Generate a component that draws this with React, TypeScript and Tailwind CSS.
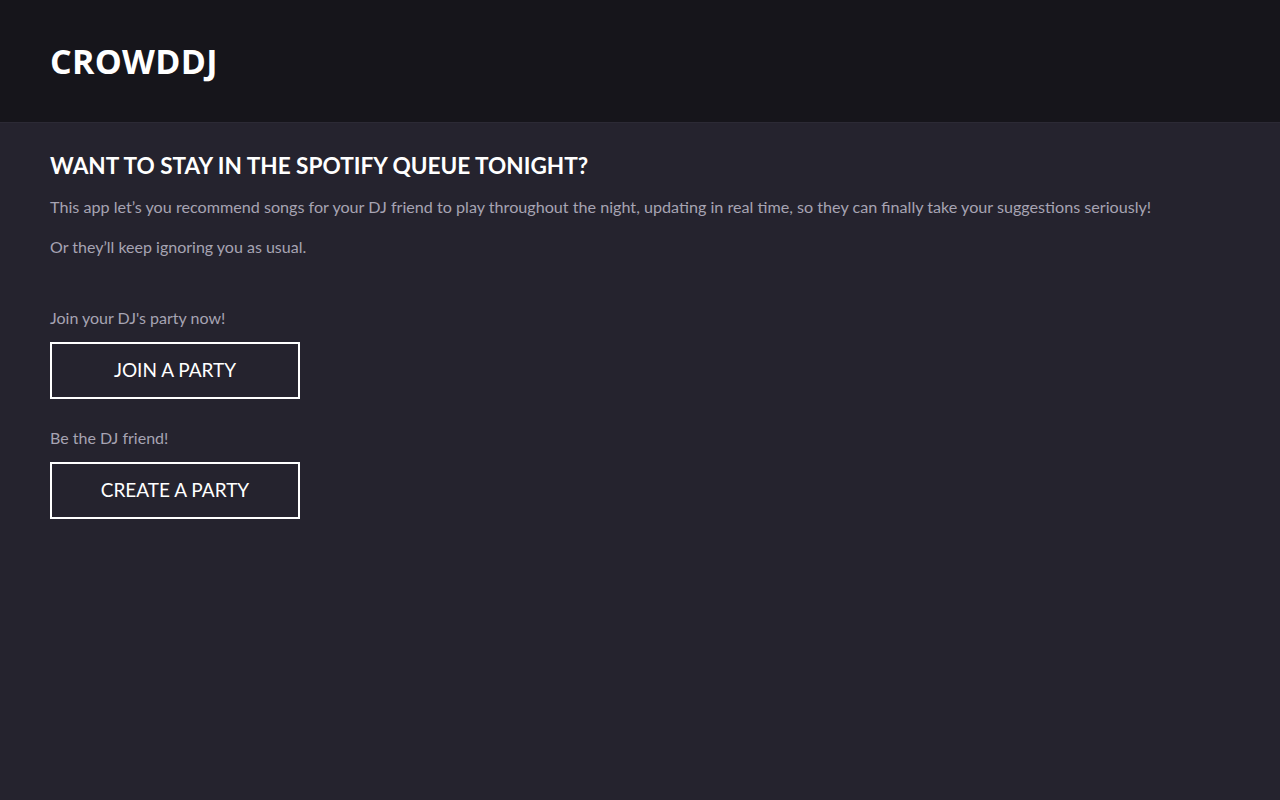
export default function App() {
  return (
    <div className="min-h-screen bg-[#25232e] font-['Lato',sans-serif]">
      <header className="h-[123px] bg-[#16151b] border-b border-[#2c2a35] flex items-center px-[50px]">
        <h1 className="text-[34px] font-bold text-white font-['Open_Sans',sans-serif] tracking-[0.3px]">CROWDDJ</h1>
      </header>
      <main className="px-[50px] pt-[29px]">
        <h2 className="text-[22.6px] font-bold text-white leading-[28px]">WANT TO STAY IN THE SPOTIFY QUEUE TONIGHT?</h2>
        <p className="mt-[17px] text-[16.15px] text-[#a7a4b3] leading-[20px]">
          This app let’s you recommend songs for your DJ friend to play throughout the night, updating in real time, so they can finally take your suggestions seriously!
        </p>
        <p className="mt-[20px] text-[16px] text-[#a7a4b3] leading-[20px]">Or they’ll keep ignoring you as usual.</p>
        <div className="mt-[51px] flex flex-col">
          <span className="text-[16px] text-[#a7a4b3] leading-[20px]">Join your DJ's party now!</span>
          <button className="mt-[14px] w-[250px] h-[57px] border-2 border-white text-white text-[19px]">JOIN A PARTY</button>
          <span className="mt-[29px] text-[16px] text-[#a7a4b3] leading-[20px]">Be the DJ friend!</span>
          <button className="mt-[14px] w-[250px] h-[57px] border-2 border-white text-white text-[19px]">CREATE A PARTY</button>
        </div>
      </main>
    </div>
  );
}
